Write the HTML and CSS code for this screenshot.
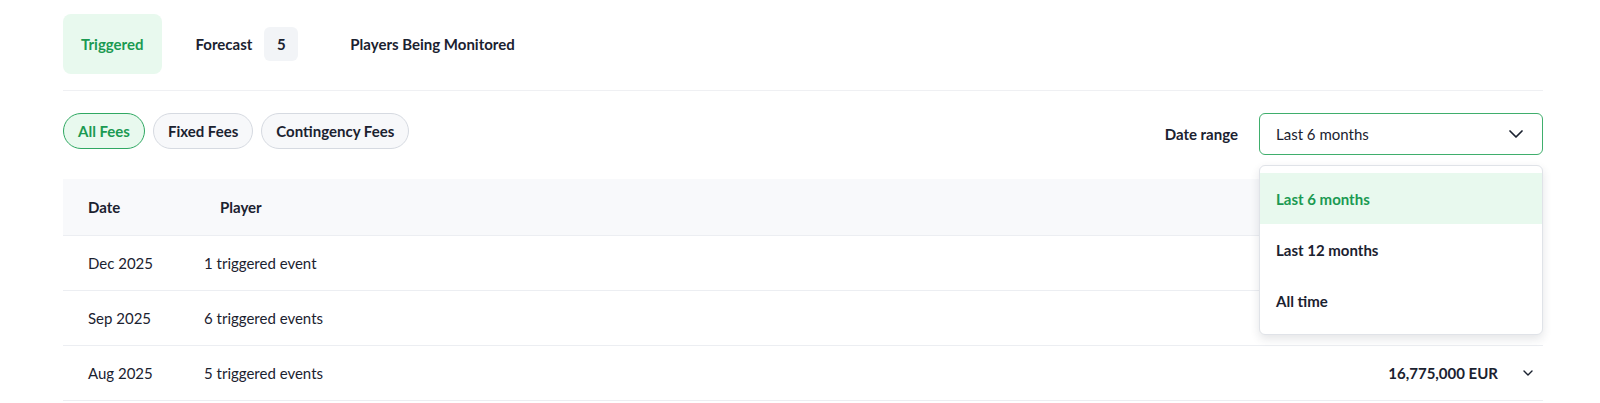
FILE: index.html
```html
<!DOCTYPE html>
<html lang="en">
<head>
<meta charset="utf-8">
<title>Fees</title>
<link rel="stylesheet" href="styles.css">
</head>
<body>
<div class="page">
  <nav class="tabs">
    <div class="tab tab-active">Triggered</div>
    <div class="tab">Forecast <span class="badge">5</span></div>
    <div class="tab">Players Being Monitored</div>
  </nav>

  <div class="filters">
    <div class="pills">
      <button class="pill pill-active">All Fees</button>
      <button class="pill">Fixed Fees</button>
      <button class="pill">Contingency Fees</button>
    </div>
    <div class="range">
      <span class="range-label">Date range</span>
      <div class="select-wrap">
        <div class="select">
          <span>Last 6 months</span>
          <svg class="chev" width="14" height="8" viewBox="0 0 14 8"><path d="M1 1l6 6 6-6" fill="none" stroke="#1b2230" stroke-width="1.7" stroke-linecap="round" stroke-linejoin="round"/></svg>
        </div>
        <ul class="menu">
          <li class="menu-item menu-item-active">Last 6 months</li>
          <li class="menu-item">Last 12 months</li>
          <li class="menu-item">All time</li>
        </ul>
      </div>
    </div>
  </div>

  <div class="table">
    <div class="row head">
      <div class="c-date">Date</div>
      <div class="c-player c-player-head">Player</div>
    </div>
    <div class="row">
      <div class="c-date">Dec 2025</div>
      <div class="c-player">1 triggered event</div>
    </div>
    <div class="row">
      <div class="c-date">Sep 2025</div>
      <div class="c-player">6 triggered events</div>
    </div>
    <div class="row">
      <div class="c-date">Aug 2025</div>
      <div class="c-player">5 triggered events</div>
      <div class="c-amount">16,775,000 EUR</div>
      <svg class="row-chev" width="10" height="6" viewBox="0 0 10 6"><path d="M1 1l4 4 4-4" fill="none" stroke="#1b2230" stroke-width="1.4" stroke-linecap="round" stroke-linejoin="round"/></svg>
    </div>
  </div>
</div>
</body>
</html>
```

FILE: styles.css
```css
* { box-sizing: border-box; }
html, body { margin: 0; padding: 0; background: #fff; }
body {
  font-family: Lato, "Noto Sans", "Liberation Sans", sans-serif;
  color: #1b2230;
  font-size: 15px;
}
.page {
  padding: 14px 57px 0 63px;
}
.tabs {
  display: flex;
  gap: 16px;
  padding-bottom: 16px;
  border-bottom: 1px solid #eff0f3;
}
.tab {
  height: 60px;
  padding: 0 18px;
  display: flex;
  align-items: center;
  gap: 12px;
  font-weight: 700;
  font-size: 15px;
  border-radius: 8px;
}
.tab-active {
  background: #e8f9ee;
  color: #1b9a52;
}
.badge {
  width: 34px;
  height: 34px;
  border-radius: 6px;
  background: #f2f4f7;
  display: inline-flex;
  align-items: center;
  justify-content: center;
  font-weight: 700;
}
.filters {
  margin-top: 22px;
  display: flex;
  justify-content: space-between;
  align-items: flex-start;
}
.pills {
  display: flex;
  gap: 8px;
}
.pill {
  height: 36px;
  padding: 0 14px;
  border-radius: 18px;
  border: 1px solid #d6dae1;
  background: #f7f8fa;
  font-family: inherit;
  font-size: 15px;
  font-weight: 700;
  color: #1b2230;
}
.pill-active {
  border-color: #2fa862;
  background: #e8f9ee;
  color: #1b9a52;
}
.range {
  display: flex;
  align-items: center;
  gap: 21px;
}
.range-label {
  font-weight: 700;
  font-size: 15px;
}
.select-wrap {
  position: relative;
}
.select {
  width: 284px;
  height: 42px;
  border: 1px solid #3fae6c;
  border-radius: 6px;
  padding: 0 19px 0 16px;
  display: flex;
  align-items: center;
  justify-content: space-between;
  font-size: 15px;
}
.menu {
  position: absolute;
  top: calc(100% + 10px);
  left: 0;
  width: 284px;
  margin: 0;
  padding: 7px 0 8px;
  list-style: none;
  background: #fff;
  border: 1px solid #e0e3e8;
  border-radius: 6px;
  box-shadow: 0 4px 10px rgba(30, 40, 60, 0.12);
  z-index: 10;
}
.menu-item {
  height: 51px;
  padding: 0 16px;
  display: flex;
  align-items: center;
  font-weight: 700;
  font-size: 15px;
}
.menu-item-active {
  background: #e8f9ee;
  color: #1b9a52;
}
.table {
  margin-top: 24px;
}
.row {
  display: flex;
  align-items: center;
  height: 55px;
  border-bottom: 1px solid #eceef2;
  padding: 0 10px 0 25px;
}
.row.head {
  height: 57px;
  background: #f8f9fb;
  font-weight: 700;
}
.c-date { width: 116px; }
.c-player { flex: 1; }
.c-player-head { padding-left: 16px; }
.c-amount {
  font-weight: 700;
  margin-right: 25px;
}
.row-chev { display: block; }
```
